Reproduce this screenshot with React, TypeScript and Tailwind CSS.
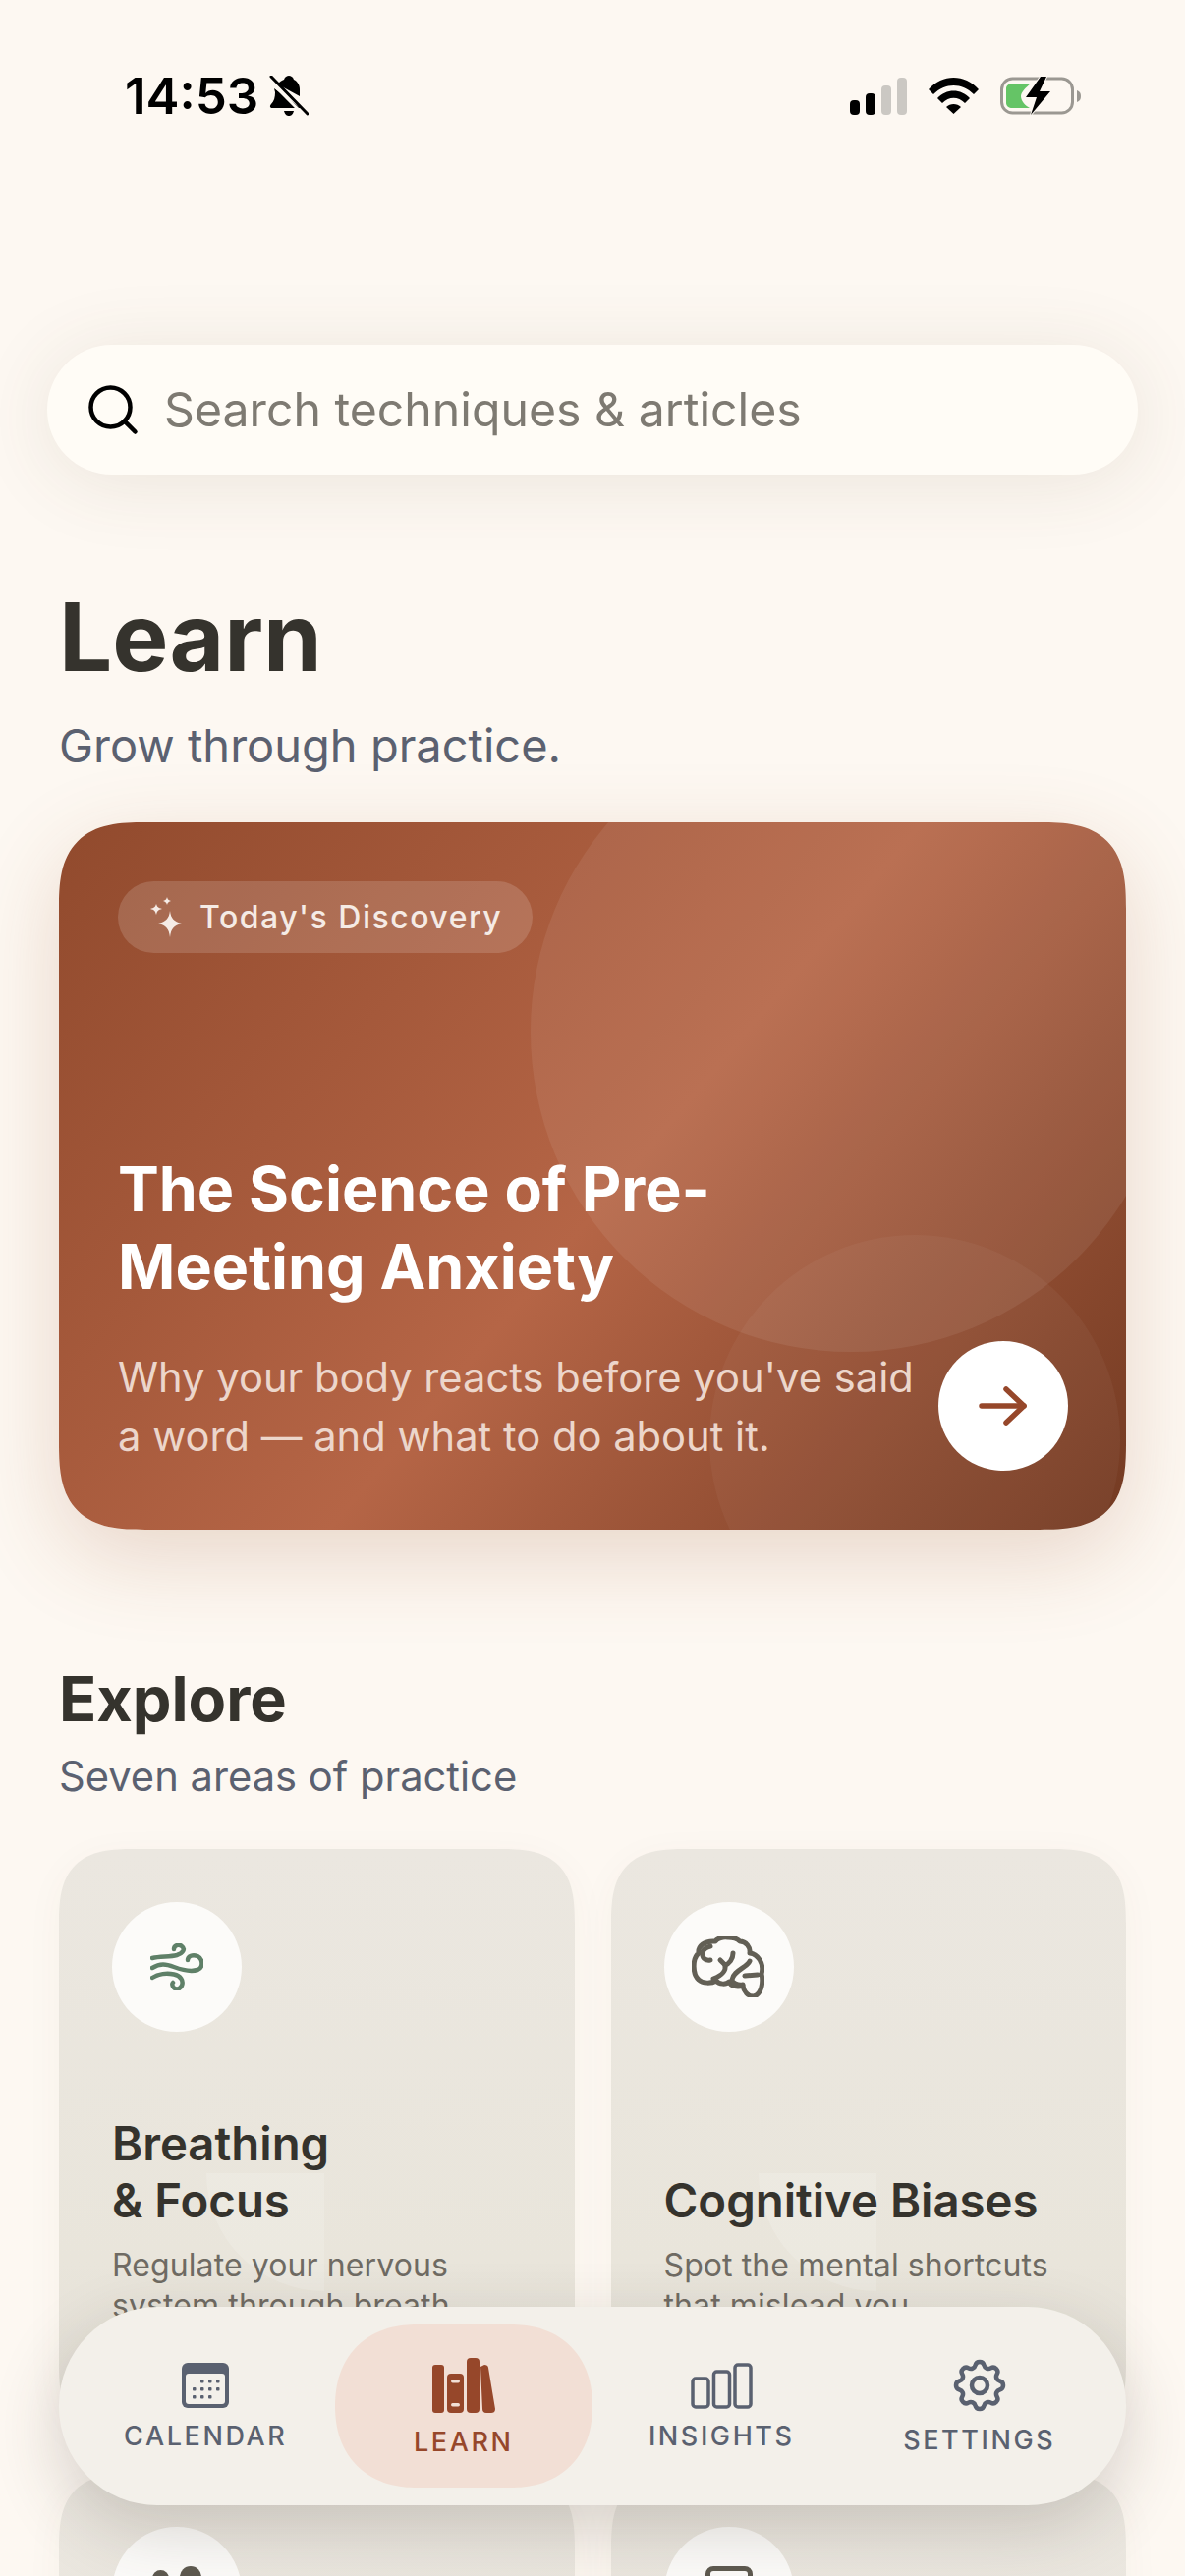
import React from 'react';
import { Search } from 'lucide-react';
import { TbSettings } from 'react-icons/tb';

const sans = 'font-[Inter,"Noto_Sans",sans-serif]';

function StatusBar() {
  return (
    <div className="flex h-[351px] items-start justify-between pl-[127px] pr-[106px] pt-[70px]">
      <div className="flex items-center gap-[11px]">
        <span className="text-[51px] leading-[56px] font-semibold text-black">14:53</span>
        <svg width="40" height="42" viewBox="0 0 40 42">
          <path d="M9 9 C10 6 13 5 15 4 C16 1 18 0 20 0 C22 0 24 1 25 4 C29 6 31 10 31 14 L31 21 Z" fill="#000" />
          <path d="M5 13 L32 33 L3 33 C1 33 0 31 2 29 C5 26 6 22 6 17 Z" fill="#000" />
          <path d="M15 36 H25 C24 40 22 41 20 41 C18 41 16 40 15 36 Z" fill="#000" />
          <path d="M2 1 L39 39" stroke="#000" strokeWidth="3" strokeLinecap="round" />
          <path d="M0 5 L33 38" stroke="#fdf8f2" strokeWidth="3" />
        </svg>
      </div>
      <div className="flex items-center gap-[22px] pt-[8px]">
        <svg width="58" height="38" viewBox="0 0 58 38">
          <rect x="0" y="23" width="10" height="15" rx="4" fill="#000" />
          <rect x="16" y="16" width="10" height="22" rx="4" fill="#000" />
          <rect x="32" y="8" width="10" height="30" rx="4" fill="#cbc8c3" />
          <rect x="48" y="0" width="10" height="38" rx="4" fill="#cbc8c3" />
        </svg>
        <svg width="51" height="37" viewBox="0 0 51 37">
          <path d="M0 12 C14 -4 37 -4 51 12 L46 17 C34 5 17 5 5 17 Z" fill="#000" />
          <path d="M9 21 C18 11 33 11 42 21 L37 26 C30 19 21 19 14 26 Z" fill="#000" />
          <path d="M18 30 C22 26 29 26 33 30 L25.500 37 Z" fill="#000" />
        </svg>
        <svg width="82" height="39" viewBox="0 0 82 39">
          <rect x="1.500" y="2" width="72" height="35" rx="11" fill="none" stroke="#9b9892" strokeWidth="3" />
          <path d="M78 14 C81 15 82 17 82 20 C82 23 81 25 78 26 Z" fill="#9b9892" />
          <path d="M12 7 H31 C26 11 21 16 21 20 C21 25 26 30 30 32 H12 C9 32 6 30 6 27 V12 C6 9 9 7 12 7 Z" fill="#65c466" />
          <path d="M41 0 L26 21 H37 L31 39 L51 15 H40 L47 0 Z" fill="#000" stroke="#fdf8f2" strokeWidth="2" paintOrder="stroke" />
        </svg>
      </div>
    </div>
  );
}

function SearchBar() {
  return (
    <div className="mx-[48px] flex h-[132px] items-center gap-[22px] rounded-full bg-[#fffcf6] pl-[37px] shadow-[0_8px_80px_rgba(90,70,50,0.11)]">
      <Search size={60} strokeWidth={1.8} className="text-black" />
      <span className="text-[48.200px] leading-[60px] text-[#7e7a72]">Search techniques &amp; articles</span>
    </div>
  );
}

function Sparkle() {
  return (
    <svg width="36" height="44" viewBox="0 0 36 44" fill="#f5ebe5">
      <path d="M22 15 C23 23 26 26 34 28 C26 30 23 33 22 42 C21 33 18 30 10 28 C18 26 21 23 22 15 Z" />
      <path d="M8 8 C9 11 10 12 14 13 C10 14 9 15 8 19 C7 15 6 14 2 13 C6 12 7 11 8 8 Z" />
      <path d="M19 1 C19.500 3 20 4 23 5 C20 6 19.500 7 19 9 C18.500 7 18 6 15 5 C18 4 18.500 3 19 1 Z" />
    </svg>
  );
}

function Hero() {
  return (
    <div className="relative mx-[60px] mt-[48px] h-[720px] rounded-[88px] [corner-shape:superellipse(1.5)] shadow-[0_28px_90px_rgba(150,80,40,0.2)]">
      <div className="absolute inset-0 overflow-hidden rounded-[88px] [corner-shape:superellipse(1.5)] bg-[linear-gradient(130deg,#914a2d_0%,#b56546_52%,#733a22_100%)]">
        <div className="absolute left-[480px] top-[-113px] h-[652px] w-[652px] rounded-full bg-white/[0.07]" />
        <div className="absolute left-[662px] top-[420px] h-[418px] w-[418px] rounded-full bg-white/[0.04]" />
      </div>
      <div className="relative px-[60px] pt-[60px]">
        <div className="flex h-[73px] w-[422px] items-center gap-[16px] rounded-full bg-white/15 pl-[31px]">
          <Sparkle />
          <span className="text-[32px] font-medium tracking-[1.5px] text-[#f5ebe5]">Today's Discovery</span>
        </div>
        <h2 className="mt-[201px] text-[62.700px] leading-[79px] font-bold text-white">
          The Science of Pre-
          <br />
          Meeting Anxiety
        </h2>
        <p className="mt-[43px] text-[41.700px] leading-[60px] text-[#ecd6cb]">
          Why your body reacts before you've said
          <br />a word — and what to do about it.
        </p>
      </div>
      <div className="absolute left-[895px] top-[528px] flex h-[132px] w-[132px] items-center justify-center rounded-full bg-white">
        <svg width="50" height="40" viewBox="0 0 50 40" fill="none" stroke="#96472a" strokeWidth="5.500" strokeLinecap="round" strokeLinejoin="round">
          <path d="M3 20 H46" />
          <path d="M28 3 L46 20 L28 37" />
        </svg>
      </div>
    </div>
  );
}

function WindIcon() {
  return (
    <svg width="54" height="48" viewBox="0 0 54 48" fill="none" stroke="#5f8068" strokeWidth="4.500" strokeLinecap="round">
      <path d="M2 15 C10 13 20 14 27 12 C33 10 36 6 32 3 C29 0.500 24 2 24 6" />
      <path d="M2 25 C10 20 16 21 24 24 C32 27 42 29 48 27 C54 25 54 16 48 13 C43 11 38 13 38 17" />
      <path d="M2 35 C8 31 17 30 24 31.500 C31 33 34 38 32 43 C30 47.500 25 47.500 23 44 C22 42 22 41 23 40" />
    </svg>
  );
}

function BrainIcon() {
  return (
    <svg width="74" height="62" viewBox="-1 -1 74 62" fill="none" stroke="#625f55" strokeWidth="5" strokeLinecap="round" strokeLinejoin="round" className="-ml-[2px]">
      <path d="M6 43 C0 38 -1 22 6 16 C5 9 12 3 23 4 C25 1 31 -1 36 0 C41 0 45 1 48 4 C54 4 59 10 58 16 C66 17 73 26 70 37 C72 46 70 58 62 60 C56 60 52 55 51 49 C46 51 39 50 37 45 C34 48 27 48 24 44 C19 47 10 47 6 43 Z" />
      <path d="M18 23 C12 24 9 20 10 15 C11 12 14 10 18 9" />
      <path d="M28 23 L33 28 C37 27 41 22 41 16" />
      <path d="M33 28 C34 34 31 38 21 42" />
      <path d="M58 24 C56 30 41 34 40 43 C40 46 46 49 51 48" />
      <path d="M53 39 L66 38" />
    </svg>
  );
}

function PeopleIcon() {
  return (
    <svg width="60" height="52" viewBox="0 0 60 52" fill="#5e5a50">
      <circle cx="13.500" cy="12.500" r="8.500" />
      <circle cx="44" cy="11" r="11" />
      <path d="M2 46 C2 32 25 32 25 46 Z" />
      <path d="M30 48 C30 27 60 27 60 48 Z" />
    </svg>
  );
}

function FrameIcon() {
  return <div className="h-[52px] w-[48px] rounded-[8px] border-[5px] border-[#5e5a50]" />;
}

function TopicCard({ icon, title, desc }: { icon: React.ReactNode; title?: React.ReactNode; desc?: React.ReactNode }) {
  return (
    <div className="relative flex h-[600px] flex-col rounded-[76px] [corner-shape:superellipse(1.5)] bg-[linear-gradient(180deg,#ebe7e0_0%,#e9e5db_70%,#e2ded6_100%)] px-[54px] pt-[54px] shadow-[0_8px_40px_rgba(90,70,50,0.04)]">
      <div className="absolute left-[150px] top-[330px] h-[120px] w-[120px] rounded-bl-full bg-white/[0.16]" />
      <div className="relative flex h-[132px] w-[132px] items-center justify-center rounded-full bg-[#fcfbf9]">{icon}</div>
      {title && (
        <div className="relative mt-auto pb-[114px]">
          <h4 className="text-[47.300px] leading-[58px] font-semibold text-[#35332d]">{title}</h4>
          <p className="mt-[16px] text-[32px] leading-[41.600px] tracking-[0.1px] text-[#6f6b63]">{desc}</p>
        </div>
      )}
    </div>
  );
}

function CalendarIcon() {
  return (
    <svg width="48" height="46" viewBox="0 0 48 46">
      <rect width="48" height="46" rx="6" fill="#5a6170" />
      <rect x="4" y="11" width="40" height="31" rx="3" fill="#f3f0ea" />
      <g fill="#5a6170">
        {[19, 27, 35].map((x) => <rect key={x} x={x} y="17" width="3.500" height="3.500" rx="1" />)}
        {[11, 19, 27, 35].map((x) => <rect key={x} x={x} y="25" width="3.500" height="3.500" rx="1" />)}
        {[11, 19, 27].map((x) => <rect key={x} x={x} y="33" width="3.500" height="3.500" rx="1" />)}
      </g>
    </svg>
  );
}

function BooksIcon() {
  return (
    <svg width="64" height="56" viewBox="0 0 64 56" fill="#96472a">
      <rect x="0" y="7" width="12" height="49" rx="3" />
      <rect x="15" y="16" width="17" height="40" rx="4" />
      <rect x="35" y="0" width="13" height="56" rx="4" />
      <path d="M49 9 L53 7 C55 7 57 8 57 10 L64 52 C64 55 62 56 60 56 H55 C52 56 51 54 51 52 Z" />
      <rect x="19" y="22" width="9" height="3.500" rx="1.700" fill="#f2dfd5" />
      <rect x="19" y="46" width="9" height="3.500" rx="1.700" fill="#f2dfd5" />
    </svg>
  );
}

function BarsIcon() {
  return (
    <svg width="63" height="47" viewBox="0 0 63 47" fill="none" stroke="#5a6170" strokeWidth="3.500">
      <rect x="2" y="16" width="16" height="29" rx="3" />
      <rect x="23.500" y="9" width="16" height="36" rx="3" />
      <rect x="45" y="2" width="16" height="43" rx="3" />
    </svg>
  );
}

function NavItem({ icon, label, active, gap }: { icon: React.ReactNode; label: string; active?: boolean; gap: string }) {
  return (
    <div className={`flex h-[166px] flex-col items-center pt-[34px] ${gap} rounded-[96px] [corner-shape:superellipse(1.15)] ${active ? 'bg-[#f2dfd5] text-[#96472a]' : 'text-[#5a6170]'}`}>
      <div className="flex h-[56px] items-center justify-center">{icon}</div>
      <span className="text-[27px] leading-[28px] font-medium tracking-[2.6px]">{label}</span>
    </div>
  );
}

function BottomNav() {
  return (
    <div className="absolute left-[60px] top-[2348px] grid h-[202px] w-[1086px] grid-cols-4 items-center rounded-[100px] bg-[#f3f0ea] px-[18px] shadow-[0_24px_70px_rgba(60,50,40,0.2)]">
      <NavItem icon={<CalendarIcon />} label="CALENDAR" gap="gap-[10px]" />
      <NavItem icon={<BooksIcon />} label="LEARN" active gap="gap-[16px]" />
      <NavItem icon={<BarsIcon />} label="INSIGHTS" gap="gap-[10px]" />
      <NavItem icon={<TbSettings size={64} strokeWidth={1.7} />} label="SETTINGS" gap="gap-[14px]" />
    </div>
  );
}

export default function App() {
  return (
    <div className={`${sans} relative h-[2622px] w-[1206px] overflow-hidden bg-[#fdf8f2]`}>
      <StatusBar />
      <SearchBar />
      <h1 className="ml-[60px] mt-[107px] text-[96px] leading-[116px] font-bold text-[#35332d]">Learn</h1>
      <p className="ml-[60px] mt-[23px] text-[47px] leading-[60px] text-[#5b6170]">Grow through practice.</p>
      <Hero />
      <section className="mx-[60px] mt-[136px]">
        <h3 className="text-[63px] leading-[72px] font-bold text-[#35332d]">Explore</h3>
        <p className="mt-[17px] text-[41.700px] leading-[52px] text-[#5b6170]">Seven areas of practice</p>
        <div className="mt-[48px] grid grid-cols-2 gap-x-[37px] gap-y-[36px]">
          <TopicCard
            icon={<WindIcon />}
            title={<>Breathing<br />&amp; Focus</>}
            desc={<>Regulate your nervous<br />system through breath</>}
          />
          <TopicCard icon={<BrainIcon />} title="Cognitive Biases" desc={<>Spot the mental shortcuts<br />that mislead you</>} />
          <TopicCard icon={<PeopleIcon />} />
          <TopicCard icon={<FrameIcon />} />
        </div>
      </section>
      <BottomNav />
    </div>
  );
}
